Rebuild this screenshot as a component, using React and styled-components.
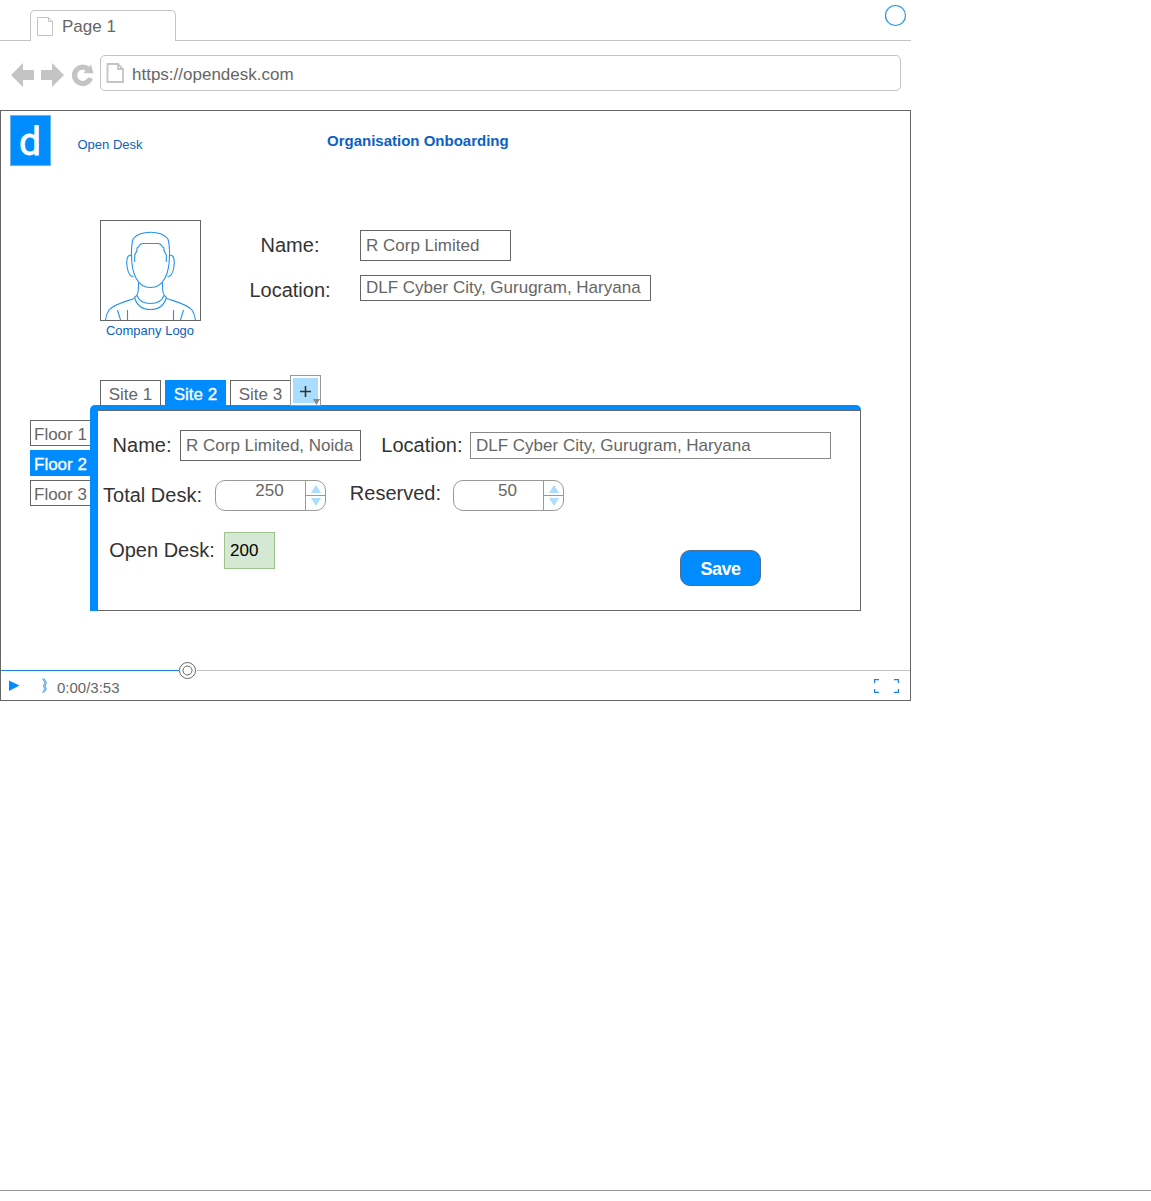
import React from "react";
import styled, { createGlobalStyle } from "styled-components";

const blue = "#008cff";
const ink = "#666666";
const rule = "#c4c4c4";

const GlobalStyle = createGlobalStyle`
  *, *::before, *::after { box-sizing: border-box; }
  body {
    margin: 0;
    background: #fff;
    font-family: "Liberation Sans", Helvetica, Arial, sans-serif;
    font-size: 17px;
    color: ${ink};
  }
  svg { display: block; flex: none; }
`;

const Page = styled.div`
  height: 1191px;
  border-bottom: 1px solid #999;
`;

const Browser = styled.div`
  width: 911px;
`;

const TabStrip = styled.div`
  display: flex;
  align-items: flex-end;
  height: 41px;
`;

const StripLead = styled.div`
  width: 30px;
  border-bottom: 1px solid ${rule};
`;

const StripRest = styled.div`
  display: flex;
  flex: 1;
  justify-content: flex-end;
  height: 41px;
  padding: 4px 4px 0 0;
  border-bottom: 1px solid ${rule};
`;

const PageTab = styled.div`
  display: flex;
  align-items: center;
  gap: 7px;
  width: 146px;
  height: 31px;
  padding: 2px 0 0 6px;
  border: 1px solid ${rule};
  border-bottom: 0;
  border-radius: 5px 5px 0 0;
`;

const Toolbar = styled.div`
  display: flex;
  align-items: center;
  height: 69px;
  padding: 0 10px 5px;
`;

const NavButtons = styled.div`
  display: flex;
  align-items: center;
  width: 90px;
  padding-top: 4px;
`;

const Address = styled.div`
  display: flex;
  align-items: center;
  gap: 8px;
  flex: 1;
  height: 36px;
  padding: 0 0 0 5px;
  border: 1px solid ${rule};
  border-radius: 5px;
`;

const Url = styled.span`
  padding-top: 3px;
`;

const Viewport = styled.main`
  height: 591px;
  border: 1px solid ${ink};
`;

const Header = styled.header`
  display: flex;
  align-items: flex-start;
  height: 109px;
  padding: 4px 0 0 9px;
`;

const Logo = styled.div`
  width: 41px;
  height: 51px;
  border: 1px solid #66b5f5;
  background: ${blue};
  color: #fff;
  font: 400 39px/53px Roboto, sans-serif;
  -webkit-text-stroke: 0.8px #fff;
  text-align: center;
  text-indent: -1px;
`;

const Brand = styled.div`
  width: 276px;
  padding-left: 26.5px;
  color: #0c5fc0;
  font-size: 13px;
  line-height: 59px;
`;

const Title = styled.h1`
  margin: 0;
  color: #0b61c4;
  font-size: 15px;
  line-height: 52px;
`;

const Company = styled.section`
  display: flex;
  height: 155px;
  padding-left: 99px;
`;

const CompanyLogo = styled.div`
  width: 101px;
`;

const Caption = styled.div`
  padding-right: 1px;
  color: #0c5fc0;
  font-size: 13px;
  line-height: 20px;
  text-align: center;
`;

const Avatar = styled.div`
  height: 101px;
  border: 1px solid ${ink};
`;

const CompanyFields = styled.div`
  display: flex;
  flex-direction: column;
  padding-left: 39px;
`;

const FieldRow = styled.div`
  display: flex;
  align-items: center;
  height: ${(p) => p.$height}px;
`;

const Label = styled.span`
  flex: none;
  width: ${(p) => p.$width}px;
  margin-right: ${(p) => p.$gap || 0}px;
  padding-top: ${(p) => p.$drop || 0}px;
  padding-bottom: ${(p) => p.$lift || 0}px;
  color: #333;
  font-size: 20px;
  line-height: 24px;
  text-align: ${(p) => p.$align || "center"};
  white-space: nowrap;
`;

const Field = styled.div`
  flex: none;
  width: ${(p) => p.$width}px;
  height: ${(p) => p.$height}px;
  padding-left: 5px;
  border: 1px solid ${(p) => (p.$soft ? "#888" : ink)};
  line-height: ${(p) => p.$line}px;
  white-space: nowrap;
`;

const SiteTabs = styled.nav`
  display: flex;
  align-items: flex-end;
  height: 30px;
  padding-left: 99px;
`;

const SiteTab = styled.div`
  width: 61px;
  height: 25px;
  margin-right: ${(p) => (p.$last ? 0 : 4)}px;
  border: 1px solid ${(p) => (p.$active ? blue : ink)};
  border-bottom: 0;
  background: ${(p) => (p.$active ? blue : "#fff")};
  color: ${(p) => (p.$active ? "#fff" : ink)};
  -webkit-text-stroke: ${(p) => (p.$active ? "0.3px #fff" : "0")};
  line-height: 28px;
  text-align: center;
`;

const AddSite = styled.button`
  position: relative;
  width: 31px;
  height: 31px;
  margin: 0 0 -1px -1px;
  padding: 2px;
  border: 1px solid #999;
  background: #fff;
`;

const AddFace = styled.span`
  display: flex;
  align-items: center;
  justify-content: center;
  width: 25px;
  height: 25px;
  padding-top: 2px;
  background: #aaddff;
`;

const Corner = styled.svg`
  position: absolute;
  right: 0;
  bottom: 0;
`;

const SiteArea = styled.section`
  display: flex;
  height: 206px;
  padding-left: 29px;
`;

const FloorTabs = styled.nav`
  display: flex;
  flex-direction: column;
  gap: 4px;
  width: 60px;
  padding-top: 15px;
`;

const FloorTab = styled.div`
  height: 26px;
  padding-left: 3px;
  border: 1px solid ${(p) => (p.$active ? blue : ink)};
  border-right: 0;
  background: ${(p) => (p.$active ? blue : "#fff")};
  color: ${(p) => (p.$active ? "#fff" : ink)};
  -webkit-text-stroke: ${(p) => (p.$active ? "0.3px #fff" : "0")};
  line-height: 27px;
  white-space: nowrap;
`;

const Panel = styled.div`
  width: 771px;
  padding: 5px 0 0 8px;
  border-radius: 5px 5px 0 0;
  background: ${blue};
`;

const PanelBody = styled.div`
  height: 201px;
  padding-top: 19px;
  border: 1px solid ${ink};
  border-left: 0;
  background: #fff;
`;

const Stepper = styled.div`
  display: flex;
  flex: none;
  width: 111px;
  height: 31px;
  border: 1px solid #999;
  border-radius: 10px;
`;

const StepValue = styled.span`
  flex: 1;
  padding-left: 18px;
  line-height: 20px;
  text-align: center;
`;

const StepButtons = styled.span`
  display: flex;
  flex-direction: column;
  width: 20px;
  border-left: 1px solid #999;
`;

const Step = styled.span`
  display: flex;
  align-items: center;
  justify-content: center;
  height: ${(p) => (p.$up ? 15 : 14)}px;
  padding-top: ${(p) => (p.$up ? 2 : 0)}px;
  padding-bottom: ${(p) => (p.$up ? 0 : 2)}px;
  border-bottom: ${(p) => (p.$up ? "1px solid #999" : "0")};
`;

const OpenCount = styled.div`
  width: 51px;
  height: 37px;
  padding-left: 5px;
  border: 1px solid #9cc48b;
  background: #d5e8d4;
  color: #000;
  line-height: 35px;
`;

const Save = styled.button`
  width: 81px;
  height: 36px;
  margin: 34px 0 0 405px;
  padding: 3px 0 0;
  border: 1px solid #4d6f91;
  border-radius: 10px;
  background: ${blue};
  color: #fff;
  font: bold 18px "Liberation Sans", sans-serif;
  letter-spacing: -0.5px;
`;

const Player = styled.footer`
  padding-top: 50px;
`;

const Track = styled.div`
  display: flex;
  align-items: center;
  height: 18px;
`;

const TrackPart = styled.div`
  width: ${(p) => (p.$played ? "178px" : "auto")};
  flex: ${(p) => (p.$played ? "none" : 1)};
  height: 1px;
  background: ${(p) => (p.$played ? "#1683dc" : rule)};
`;

const Controls = styled.div`
  display: flex;
  align-items: center;
  height: 21px;
  margin-top: -4px;
  padding: 0 10px 0 8px;
`;

const Time = styled.span`
  flex: 1;
  padding: 4px 0 0 8px;
  font-size: 15px;
  line-height: 18px;
`;

function FileIcon({ heavy }) {
  return (
    <svg width="18" height="20" viewBox="0 0 18 20" fill="none" stroke={rule} strokeWidth={heavy ? 1.8 : 1}>
      {heavy ? (
        <path d="M1.500 1H12L17 6V19H1.500ZM12 1V6H17" />
      ) : (
        <path d="M.5 .5H11.5L15.5 4.5V18.5H.5ZM11.5 .5V4.5H15.5" />
      )}
    </svg>
  );
}

function NavIcons() {
  return (
    <svg width="86" height="28" viewBox="0 0 86 28" fill={rule}>
      <path d="M1 14 13 2V9H24V19H13V26ZM54 14 42 2V9H31V19H42V26Z" />
      <path d="M80.500 17A8.200 8.200 0 1 1 78 8" fill="none" stroke={rule} strokeWidth="5.200" />
      <path d="M81 3.500 83.500 12.500 73.500 12Z" />
    </svg>
  );
}

function Person() {
  return (
    <svg width="99" height="99" viewBox="101 221 99 99" fill="none" stroke="#2492ee" strokeWidth="1.1">
      <path d="M131.500 257C131.300 249 131.500 243 133.300 238.500C137 234.500 143 232.300 150.500 232.300S164 234.500 167.700 238.500C169.500 243 169.700 249 169.500 257" />
      <path d="M134.700 262V255L137 250.500V248L139 246.500C139.500 244 141 243.500 143.500 243.500H157.500C160 243.500 161.500 244 162 246.500L164 248V250.500L166.300 255V262" />
      <path d="M131.500 255C131.500 273 137 287.500 150.500 287.500S169.500 273 169.500 255" />
      <path d="M131.500 255.500C126.500 254 126 262 127.300 268C128.500 274 130 277 133.500 276.500M169.500 255.500C174.500 254 175 262 173.700 268C172.500 274 171 277 167.500 276.500" />
      <path d="M138.500 282.500C138.500 291 138.500 295 134.500 297.500C137 306 143 309.500 150.500 309.500S164 306 166.500 297.500C162.500 295 162.500 291 162.500 282.500" />
      <path d="M137 295.500C139 301 143 303.500 150.500 303.500S162 301 164 295.500" />
      <path d="M134 298.500C126 301.500 114 304 109 310C107 313 106 316 105.500 320M167 298.500C175 301.500 187 304 192 310C194 313 195 316 195.500 320M117.500 310L120.500 320M183.500 310L180.500 320M127.500 310V320M173.500 310V320" />
    </svg>
  );
}

function NumberStepper({ value }) {
  return (
    <Stepper>
      <StepValue>{value}</StepValue>
      <StepButtons>
        <Step $up>
          <svg width="10" height="8"><path d="M5 0 10 8H0Z" fill="#aaddff" /></svg>
        </Step>
        <Step>
          <svg width="10" height="8"><path d="M0 0H10L5 8Z" fill="#aaddff" /></svg>
        </Step>
      </StepButtons>
    </Stepper>
  );
}

export default function App() {
  return (
    <Page>
      <GlobalStyle />
      <Browser>
        <TabStrip>
          <StripLead />
          <PageTab><FileIcon />Page 1</PageTab>
          <StripRest>
            <svg width="23" height="23"><circle cx="11.500" cy="11.500" r="10" fill="none" stroke="#2492ee" strokeWidth="1.2" /></svg>
          </StripRest>
        </TabStrip>
        <Toolbar>
          <NavButtons><NavIcons /></NavButtons>
          <Address><FileIcon heavy /><Url>https://opendesk.com</Url></Address>
        </Toolbar>
        <Viewport>
          <Header>
            <Logo>d</Logo>
            <Brand>Open Desk</Brand>
            <Title>Organisation Onboarding</Title>
          </Header>
          <Company>
            <CompanyLogo>
              <Avatar><Person /></Avatar>
              <Caption>Company Logo</Caption>
            </CompanyLogo>
            <CompanyFields>
              <FieldRow $height={51}>
                <Label $width={100} $gap={20} $lift={1}>Name:</Label>
                <Field $width={151} $height={31} $line={29}>R Corp Limited</Field>
              </FieldRow>
              <FieldRow $height={34}>
                <Label $width={100} $gap={20} $drop={4}>Location:</Label>
                <Field $width={291} $height={26} $line={24}>DLF Cyber City, Gurugram, Haryana</Field>
              </FieldRow>
            </CompanyFields>
          </Company>
          <SiteTabs>
            <SiteTab>Site 1</SiteTab>
            <SiteTab $active>Site 2</SiteTab>
            <SiteTab $last>Site 3</SiteTab>
            <AddSite aria-label="Add site">
              <AddFace>
                <svg width="11" height="11"><path d="M5.500 0V11M0 5.500H11" stroke="#333" strokeWidth="1.600" /></svg>
              </AddFace>
              <Corner width="7" height="6"><path d="M0 0H7L3.500 6Z" fill="#888" /></Corner>
            </AddSite>
          </SiteTabs>
          <SiteArea>
            <FloorTabs>
              <FloorTab>Floor 1</FloorTab>
              <FloorTab $active>Floor 2</FloorTab>
              <FloorTab>Floor 3</FloorTab>
            </FloorTabs>
            <Panel>
              <PanelBody>
                <FieldRow $height={31}>
                  <Label $width={73.5} $gap={8.5} $lift={2} $align="right">Name:</Label>
                  <Field $width={181} $height={31} $line={29}>R Corp Limited, Noida</Field>
                  <Label $width={101.5} $gap={7.5} $lift={2} $align="right">Location:</Label>
                  <Field $width={361} $height={27} $line={25} $soft>DLF Cyber City, Gurugram, Haryana</Field>
                </FieldRow>
                <FieldRow $height={69}>
                  <Label $width={109} $gap={8} $lift={2}>Total Desk:</Label>
                  <NumberStepper value={250} />
                  <Label $width={115} $gap={12} $lift={6} $align="right">Reserved:</Label>
                  <NumberStepper value={50} />
                </FieldRow>
                <FieldRow $height={41}>
                  <Label $width={128} $gap={-2} $lift={2}>Open Desk:</Label>
                  <OpenCount>200</OpenCount>
                  <Save>Save</Save>
                </FieldRow>
              </PanelBody>
            </Panel>
          </SiteArea>
          <Player>
            <Track>
              <TrackPart $played />
              <svg width="18" height="18" fill="none" stroke={ink}><circle cx="8.500" cy="9.500" r="8" /><circle cx="8.500" cy="9.500" r="4.500" /></svg>
              <TrackPart />
            </Track>
            <Controls>
              <svg width="40" height="16">
                <path d="M0 2.500V13L10.500 7.500Z" fill={blue} />
                <path d="M33.500 .5 36 4.500 34.500 8 36 11 33.500 14.500M35 .5 37.300 4.500 36 8 37.300 11 35 14.500" fill="none" stroke="#2492ee" strokeWidth=".9" />
              </svg>
              <Time>0:00/3:53</Time>
              <svg width="26" height="14" fill="none" stroke="#1683dc" strokeWidth="1.200"><path d="M5 .6H.6V4M.6 10V13.400H5M20 .6H24.400V4M24.400 10V13.400H20" /></svg>
            </Controls>
          </Player>
        </Viewport>
      </Browser>
    </Page>
  );
}
